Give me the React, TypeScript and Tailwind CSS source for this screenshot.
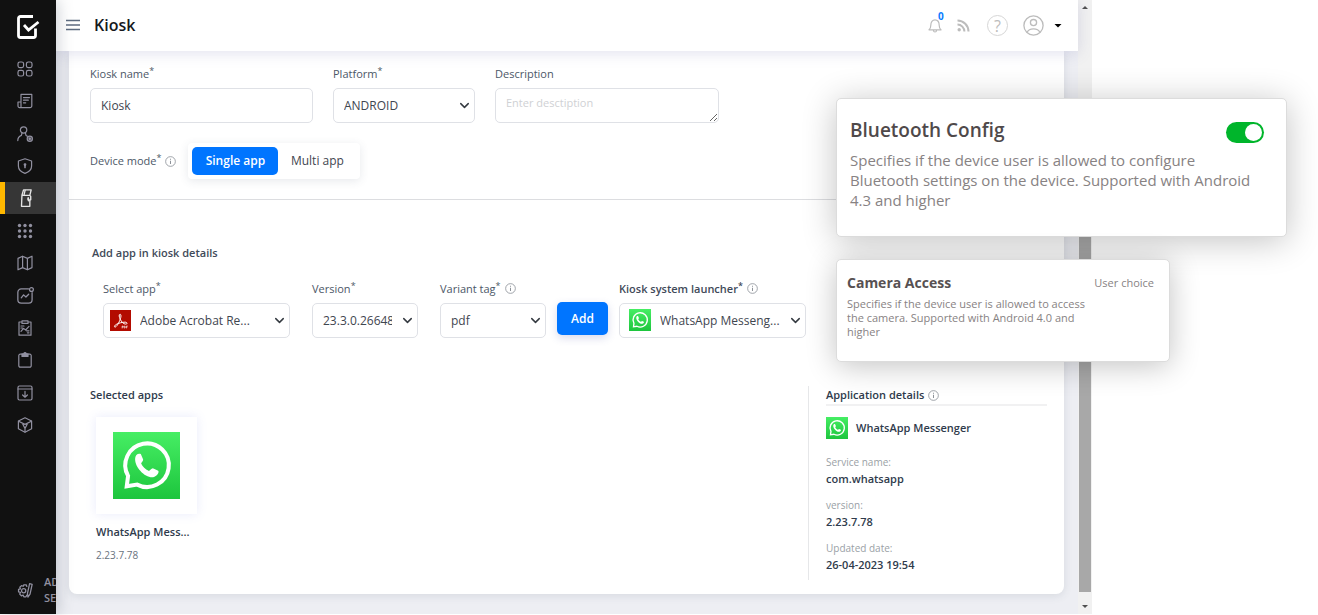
import React, { useState } from "react";
import { ChevronDown } from "lucide-react";

type IconProps = { className?: string; children: React.ReactNode };

function NavIcon({ className = "size-4", children }: IconProps) {
  return (
    <svg
      viewBox="0 0 16 16"
      className={className}
      fill="none"
      stroke="currentColor"
      strokeWidth="1.2"
      strokeLinecap="round"
      strokeLinejoin="round"
      aria-hidden="true"
    >
      {children}
    </svg>
  );
}

const navItems = [
  {
    label: "Dashboard",
    icon: (
      <NavIcon>
        <rect x="1" y="1" width="5.6" height="5.6" rx="1.8" />
        <rect x="9.4" y="1" width="5.6" height="5.6" rx="1.8" />
        <rect x="1" y="9.4" width="5.6" height="5.6" rx="1.8" />
        <rect x="9.4" y="9.4" width="5.6" height="5.6" rx="1.8" />
      </NavIcon>
    ),
  },
  {
    label: "Reports",
    icon: (
      <NavIcon>
        <path d="M4 14.6V1.4h10.8v11.4a1.8 1.8 0 0 1-1.8 1.8H2.6A1.6 1.6 0 0 1 1 13V9h3M6.5 4.6h6M6.5 7.2h4.8M6.5 9.8h2.2" />
      </NavIcon>
    ),
  },
  {
    label: "Users",
    icon: (
      <NavIcon>
        <circle cx="6.6" cy="4" r="3.2" />
        <path d="M5 7 4.4 9.4C2 10.4 .8 12 .8 14.6M8.4 7l.6 2.4 1.4.8" />
        <circle cx="12.8" cy="12.8" r="2.6" fill="currentColor" fillOpacity=".4" />
        <circle cx="12.8" cy="12.8" r=".6" />
      </NavIcon>
    ),
  },
  {
    label: "Security",
    icon: (
      <NavIcon>
        <path d="M8 .8 14.6 3v5c0 3.4-2.6 6-6.6 7.4C4 14 1.4 11.4 1.4 8V3Z" />
        <path d="M8 7v2.6" strokeWidth="1.6" />
        <circle cx="8" cy="6.6" r=".8" fill="currentColor" />
      </NavIcon>
    ),
  },
  {
    label: "Kiosk",
    icon: (
      <NavIcon className="size-[18px]">
        <path d="M5.8.8h6.8l-1.2 4.8H4.4ZM4.4 5.6 4 15.4h7.4V9.6M11.4 5.6l.8 1v3h-2.4V8" />
        <path d="M7.2 1.2 6.2 5.4M10.2 8v2.4" />
      </NavIcon>
    ),
  },
  {
    label: "Apps",
    icon: (
      <NavIcon>
        {[2.5, 8, 13.5].map((y) =>
          [2.5, 8, 13.5].map((x) => (
            <circle key={`${x}-${y}`} cx={x} cy={y} r="1.7" fill="currentColor" stroke="none" />
          ))
        )}
      </NavIcon>
    ),
  },
  {
    label: "Map",
    icon: (
      <NavIcon>
        <path d="M1 3.4 5.6 1.2l4.8 2.2L15 1.2v11.4l-4.6 2.2-4.8-2.2L1 14.8ZM5.6 1.2v11.4M10.4 3.4v11.4" />
      </NavIcon>
    ),
  },
  {
    label: "Analytics",
    icon: (
      <NavIcon className="size-[17px]">
        <path d="M10.8 1.8H4A3.2 3.2 0 0 0 .8 5v7A3.2 3.2 0 0 0 4 15.2h7a3.2 3.2 0 0 0 3.2-3.2V5.2" />
        <path d="M4 10.2 6.2 7.4l2.2 2L11 6.8" />
        <circle cx="13.6" cy="2.4" r="1.8" />
      </NavIcon>
    ),
  },
  {
    label: "Audit",
    icon: (
      <NavIcon>
        <path d="M5 2H2v13.2h12V2h-3M5 .8h6v2.6H5ZM4 6h3M4 11.4l2.6-3 2 1.6L12 6.4M4 8h1.6M10.4 12.8H12M9.6 10.8H12" />
      </NavIcon>
    ),
  },
  {
    label: "Tasks",
    icon: (
      <NavIcon>
        <path d="M4.8 2.2H3.2A1.4 1.4 0 0 0 1.8 3.6v10.2a1.4 1.4 0 0 0 1.4 1.4h9.6a1.4 1.4 0 0 0 1.4-1.4V3.6a1.4 1.4 0 0 0-1.4-1.4h-1.6" />
        <path d="M5 1.8h1.6C6.8 1 7.3.6 8 .6s1.2.4 1.4 1.2H11v2.6H5Z" fill="currentColor" />
      </NavIcon>
    ),
  },
  {
    label: "Downloads",
    icon: (
      <NavIcon>
        <rect x="1" y="1" width="14" height="14" rx="1.4" />
        <path d="M1 4h14M8 6.4v5.8M5.6 10 8 12.2 10.4 10" />
      </NavIcon>
    ),
  },
  {
    label: "Packages",
    icon: (
      <NavIcon>
        <path d="M8 .8 14.6 4v7.8L8 15.2l-6.6-3.4V4Z" />
        <path d="M1.6 4.2 8 7.4l6.4-3.2M8 15v-3.6M5.8 7.2l2.2 4.2 2.2-4.2Z" />
      </NavIcon>
    ),
  },
];

function WhatsAppLogo({ className }: { className?: string }) {
  return (
    <svg viewBox="0 0 200 200" className={className} aria-hidden="true">
      <defs>
        <linearGradient id="wa" x1="0" y1="0" x2="0" y2="1">
          <stop offset="0" stopColor="#46ee64" />
          <stop offset="1" stopColor="#1dc53d" />
        </linearGradient>
      </defs>
      <rect width="200" height="200" fill="url(#wa)" />
      <path
        d="M45 131A65 65 0 1 1 72 157L41 162Z"
        fill="none"
        stroke="#fff"
        strokeWidth="12"
        strokeLinejoin="miter"
      />
      <path
        d="M66 80C66 68 76 62 83 66L90 82C91 86 84 91 84 94C88 103 97 112 106 116C110 117 114 108 119 108L135 116C139 120 131 133 120 135C96 138 65 106 66 80Z"
        fill="#fff"
      />
    </svg>
  );
}

function AcrobatLogo({ className }: { className?: string }) {
  return (
    <svg viewBox="0 0 64 64" className={className} fill="none" stroke="#fff" aria-hidden="true">
      <rect width="64" height="64" fill="#b30b00" stroke="none" />
      <path
        strokeWidth="3"
        d="M31 13c-5 0-3 9 0 15 4 8 10 15 17 15 6 0 5-6-2-6-9 0-20 3-27 7-6 3-7 9-3 8 6-2 14-18 17-30 1-5 0-9-2-9Z"
      />
      <path strokeWidth="2" d="M37 56v-7h3v3h-3M43 49v6h2l2-3-2-3ZM50 56v-7h4M50 52h3" />
    </svg>
  );
}

function InfoIcon() {
  return (
    <svg viewBox="0 0 12 12" className="size-[11px] shrink-0 text-[#8d9299]" fill="none" stroke="currentColor" aria-hidden="true">
      <circle cx="6" cy="6" r="5.3" strokeWidth=".9" />
      <path d="M6 5.2v3.6M6 3v1.1" strokeWidth="1.1" />
    </svg>
  );
}

type FieldProps = {
  id: string;
  label: string;
  required?: boolean;
  info?: boolean;
  bold?: boolean;
  className?: string;
  children: React.ReactNode;
};

function Field({ id, label, required, info, bold, className = "", children }: FieldProps) {
  return (
    <div className={className}>
      <div className="flex h-[15px] items-center gap-1 text-[11px] leading-[15px]">
        <label htmlFor={id} className={bold ? "whitespace-nowrap font-semibold text-[#3f4a59]" : "whitespace-nowrap text-[#4c5767]"}>
          {label}
          {required && <sup className="-top-1 text-[9px]">*</sup>}
        </label>
        {info && <InfoIcon />}
      </div>
      <div className="relative mt-[7px]">{children}</div>
    </div>
  );
}

const control =
  "block h-[35px] w-full appearance-none rounded-[5px] border border-[#dfe1e6] bg-white text-[12px] text-[#3f4650] outline-none";

function Chevron() {
  return <ChevronDown className="pointer-events-none absolute top-[10px] right-[3px] size-[15px] text-[#343a40]" strokeWidth={2.3} />;
}

const details = [
  { label: "Service name:", value: "com.whatsapp" },
  { label: "version:", value: "2.23.7.78" },
  { label: "Updated date:", value: "26-04-2023 19:54" },
];

export default function App() {
  const [mode, setMode] = useState("single");
  const [bluetooth, setBluetooth] = useState(true);

  return (
    <div className="relative flex min-h-screen bg-white pb-px font-['Open_Sans',sans-serif] text-[12px]">
      {/* Sidebar */}
      <aside className="z-20 flex w-14 shrink-0 flex-col overflow-hidden bg-[#111111] text-[#9190a0] shadow-[2px_0_14px_rgba(60,70,90,0.25)]">
        <a href="#home" aria-label="Home" className="flex h-[53px] items-center pl-4 text-white">
          <svg viewBox="0 0 24 26" className="h-[26px] w-6" fill="none" stroke="currentColor" strokeWidth="2.8" aria-hidden="true">
            <path d="M17 2.5H4.5a2 2 0 0 0-2 2v17a2 2 0 0 0 2 2h13a2 2 0 0 0 2-2v-7" />
            <path d="m8 11 4.500 5L22.500 8" />
          </svg>
        </a>
        <nav className="flex h-[388px] flex-col justify-between">
          {navItems.map((item) => (
            <a
              key={item.label}
              href={`#${item.label.toLowerCase()}`}
              aria-label={item.label}
              className={
                item.label === "Kiosk"
                  ? "flex h-8 items-center justify-center border-l-[5px] border-[#ffb800] bg-[#363636] pr-[10px] text-[#e4e4e4]"
                  : "flex h-8 items-center justify-center pr-[6px]"
              }
            >
              {item.icon}
            </a>
          ))}
        </nav>
        <a href="#settings" className="mt-auto mb-2 flex items-center pl-4 text-[11px] leading-4 font-semibold">
          <NavIcon className="mr-[11px] size-[17px] shrink-0">
            <path d="M10.2 4.2 9.6 2.6H7.4L6.8 4l-1.6-.6L3.6 5l.6 1.5-1.8.5v2.2l1.800.6-.7 1.600 1.600 1.600 1.600-.7.7 1.600h2l.8-1.600" />
            <circle cx="7.2" cy="8.2" r="2" />
            <path d="m15.2 2.2-2 9.2-2 2.8-.4-3.4 2-9.2Z" />
          </NavIcon>
          <span>
            AD
            <br />
            SE
          </span>
        </a>
      </aside>

      <div className="flex min-w-0 flex-1 flex-col bg-[#edeef3]">
        {/* Header */}
        <header className="z-10 flex h-[51px] items-center bg-white pr-4 pl-[10px] shadow-[0_2px_14px_rgba(90,90,160,0.18)]">
          <button type="button" aria-label="Toggle menu" className="mr-[14px] flex h-6 items-start pt-[5px]">
            <svg viewBox="0 0 14 12" className="h-3 w-[14px]" stroke="#5d6b80" strokeWidth="1.4" aria-hidden="true">
              <path d="M0 1.5h14M0 6h14M0 10.5h14" />
            </svg>
          </button>
          <h1 className="pb-[2px] text-[16px] font-semibold text-[#15181c]">Kiosk</h1>
          <div className="ml-auto flex items-center text-[#bcbcbc]">
            <button type="button" aria-label="Notifications" className="relative mr-[15px]">
              <svg viewBox="0 0 14 15" className="h-[15px] w-[14px]" fill="none" stroke="currentColor" strokeWidth="1.2" strokeLinejoin="round" aria-hidden="true">
                <path d="M1 11.8c1.4-1 1.8-2.4 1.8-4.6C2.8 4 4.4 1.8 7 1.8s4.2 2.2 4.2 5.4c0 2.2.4 3.6 1.8 4.6ZM5.4 12.2c.2 2.4 3 2.4 3.2 0" />
              </svg>
              <span className="absolute -top-[9px] left-[10px] text-[10px] leading-[14px] font-bold text-[#0a7cff]">0</span>
            </button>
            <a href="#feed" aria-label="Feed" className="mr-[17px]">
              <svg viewBox="0 0 13 13" className="size-[13px]" fill="none" stroke="currentColor" strokeWidth="2" aria-hidden="true">
                <circle cx="2.2" cy="10.8" r="1.7" fill="currentColor" stroke="none" />
                <path d="M.5 5.6a7 7 0 0 1 6.900 6.900M.5 1.500a11 11 0 0 1 11 11" />
              </svg>
            </a>
            <button type="button" aria-label="Help" className="mr-[15px] flex size-[21px] items-center justify-center rounded-full border border-[#d6d6d6] text-[16px] leading-none">
              ?
            </button>
            <button type="button" aria-label="Account" className="flex items-center gap-[10px]">
              <svg viewBox="0 0 21 21" className="size-[21px]" fill="none" stroke="currentColor" strokeWidth="1.3" aria-hidden="true">
                <circle cx="10.5" cy="10.5" r="9.6" />
                <circle cx="10.5" cy="7.6" r="3.1" />
                <path d="M4 17.4c1.4-3 3.8-3.6 6.5-3.6s5.1.6 6.5 3.6" />
              </svg>
              <svg viewBox="0 0 8 4" className="h-1 w-2" aria-hidden="true">
                <path d="M.5 0h7L4 3.5Z" fill="#000" />
              </svg>
            </button>
          </div>
        </header>

        {/* Kiosk form */}
        <main className="mr-[14px] mb-5 ml-[13px] flex-1 rounded-b-lg bg-white shadow-[0_2px_8px_rgba(60,70,90,0.12)]">
          <section className="border-b border-[#dcdde0] px-[21px] pt-[15px] pb-5">
            <div className="flex gap-5">
              <Field id="name" label="Kiosk name" required className="w-[223px]">
                <input id="name" defaultValue="Kiosk" className={`${control} px-[10px]`} />
              </Field>
              <Field id="platform" label="Platform" required className="w-[142px]">
                <select id="platform" className={`${control} pr-6 pl-[10px]`}>
                  <option>ANDROID</option>
                </select>
                <Chevron />
              </Field>
              <Field id="description" label="Description" className="w-[224px]">
                <textarea
                  id="description"
                  placeholder="Enter desctiption"
                  className={`${control} resize px-[10px] py-[6px] placeholder:text-[11px] placeholder:text-[#cfd1d4]`}
                />
              </Field>
            </div>
            <div className="mt-5 flex items-center gap-1 text-[#4c5767]">
              <span className="text-[11px]">
                Device mode<sup className="-top-1 text-[9px]">*</sup>
              </span>
              <InfoIcon />
              <div className="ml-2 flex h-9 items-center rounded-[4px] bg-white px-1 shadow-[0_2px_10px_rgba(60,70,100,0.12)]">
                <button
                  type="button"
                  aria-pressed={mode === "single"}
                  onClick={() => setMode("single")}
                  className="h-7 w-[86px] rounded-[5px] text-[#3f4650] aria-pressed:bg-[#0075ff] aria-pressed:font-semibold aria-pressed:text-white"
                >
                  Single app
                </button>
                <button
                  type="button"
                  aria-pressed={mode === "multi"}
                  onClick={() => setMode("multi")}
                  className="h-7 w-[78px] rounded-[5px] text-[#3f4650] aria-pressed:bg-[#0075ff] aria-pressed:font-semibold aria-pressed:text-white"
                >
                  Multi app
                </button>
              </div>
            </div>
          </section>

          <section className="px-[23px] pt-[44px]">
            <h2 className="text-[11px] leading-[18px] font-semibold text-[#3f4a59]">Add app in kiosk details</h2>
            <div className="mt-[19px] flex items-start pl-[11px]">
              <Field id="app" label="Select app" required className="mr-[22px] w-[187px]">
                <select id="app" className={`${control} pr-6 pl-[36px]`}>
                  <option>Adobe Acrobat Re...</option>
                </select>
                <AcrobatLogo className="pointer-events-none absolute top-[7px] left-[7px] size-[21px]" />
                <Chevron />
              </Field>
              <Field id="version" label="Version" required className="mr-[22px] w-[106px]">
                <select id="version" className={`${control} pr-[25px] pl-[10px]`}>
                  <option>23.3.0.26648</option>
                </select>
                <Chevron />
              </Field>
              <Field id="variant" label="Variant tag" required info className="mr-[11px] w-[106px]">
                <select id="variant" className={`${control} border-[#c3cbd0] pr-6 pl-[10px]`}>
                  <option>pdf</option>
                </select>
                <Chevron />
              </Field>
              <button
                type="button"
                className="mt-[21px] mr-[11px] h-[33px] w-[51px] rounded-[5px] bg-[#0075ff] font-semibold text-white shadow-[0_3px_8px_rgba(60,70,160,0.2)]"
              >
                Add
              </button>
              <Field id="launcher" label="Kiosk system launcher" required info bold className="w-[187px]">
                <select id="launcher" className={`${control} pr-6 pl-10`}>
                  <option>WhatsApp Messeng...</option>
                </select>
                <WhatsAppLogo className="pointer-events-none absolute top-[6px] left-[10px] size-[22px]" />
                <Chevron />
              </Field>
            </div>
          </section>

          <section className="flex pt-12 pr-[17px] pl-[21px] text-[11px] text-[#2f3b4c]">
            <div className="flex-1">
              <h2 className="leading-[18px] font-semibold">Selected apps</h2>
              <div className="mt-[13px] ml-[6px] w-[101px]">
                <div className="flex h-[97px] items-center justify-center bg-white shadow-[0_0_10px_rgba(100,110,230,0.14)]">
                  <WhatsAppLogo className="size-[67px]" />
                </div>
                <p className="mt-[9px] leading-[18px] font-semibold whitespace-nowrap">WhatsApp Mess...</p>
                <p className="mt-[6px] text-[10px] leading-4 text-[#6a7380]">2.23.7.78</p>
              </div>
            </div>
            <div className="h-[194px] w-[239px] border-l border-[#e6e7e9] pl-[17px]">
              <div className="flex items-center gap-1 border-b-2 border-[#f1f1f2]">
                <h2 className="leading-[18px] font-semibold">Application details</h2>
                <InfoIcon />
              </div>
              <div className="mt-[11px] mb-[15px] flex items-center gap-2">
                <WhatsAppLogo className="size-[22px]" />
                <span className="font-semibold">WhatsApp Messenger</span>
              </div>
              <dl>
                {details.map((item) => (
                  <div key={item.label} className="mb-[9px]">
                    <dt className="text-[10px] leading-4 text-[#9a9fa6]">{item.label}</dt>
                    <dd className="leading-[18px] font-semibold">{item.value}</dd>
                  </div>
                ))}
              </dl>
            </div>
          </section>
        </main>
      </div>

      {/* Scroll bar */}
      <div className="mr-[226px] flex w-[14px] shrink-0 flex-col items-center bg-[#f1f1f1] py-[6px]" aria-hidden="true">
        <svg viewBox="0 0 6 3" className="h-[3px] w-[6px]">
          <path d="M0 3h6L3 0Z" fill="#505050" />
        </svg>
        <div className="mt-[180px] w-3 flex-1 bg-[#a8a8a8]" />
        <svg viewBox="0 0 6 3" className="mt-[13px] h-[3px] w-[6px]">
          <path d="M0 0h6L3 3Z" fill="#505050" />
        </svg>
      </div>

      {/* Policy cards floating over the console */}
      <div className="absolute top-[98px] right-[31px] z-30 flex w-[451px] flex-col items-start gap-[22px]">
        <div className="flex h-[139px] w-full justify-between rounded-[5px] border border-[#dcdcdc] bg-white pt-[18px] pr-[22px] pl-[13px] shadow-[0_4px_34px_rgba(0,0,0,0.24)]">
          <div className="w-[410px]">
            <h3 className="text-[19px] leading-[26px] font-semibold text-[#4f494a]">
              <label htmlFor="bluetooth">Bluetooth Config</label>
            </h3>
            <p className="mt-[7px] text-[15px] leading-5 text-[#878283]">
              Specifies if the device user is allowed to configure
              <br />
              Bluetooth settings on the device. Supported with Android 4.3 and higher
            </p>
          </div>
          <input
            id="bluetooth"
            type="checkbox"
            checked={bluetooth}
            onChange={(e) => setBluetooth(e.target.checked)}
            className="mt-[5px] -ml-10 flex h-[21px] w-[38px] shrink-0 appearance-none items-center rounded-full bg-gray-300 px-[2px] before:size-[17px] before:rounded-full before:bg-white checked:justify-end checked:bg-[#00b52b]"
          />
        </div>
        <div className="h-[103px] w-[334px] rounded-[5px] border border-[#dcdcdc] bg-white pt-[13px] pr-[15px] pl-[10px] shadow-[0_4px_30px_rgba(0,0,0,0.24)]">
          <div className="flex items-center justify-between">
            <h3 className="text-[14px] leading-5 font-bold text-[#575152]">Camera Access</h3>
            <span className="text-[11px] text-[#878283]">User choice</span>
          </div>
          <p className="mt-1 w-[246px] text-[11px] leading-[14px] text-[#878283]">
            Specifies if the device user is allowed to access the camera. Supported with Android 4.0 and higher
          </p>
        </div>
      </div>
    </div>
  );
}
